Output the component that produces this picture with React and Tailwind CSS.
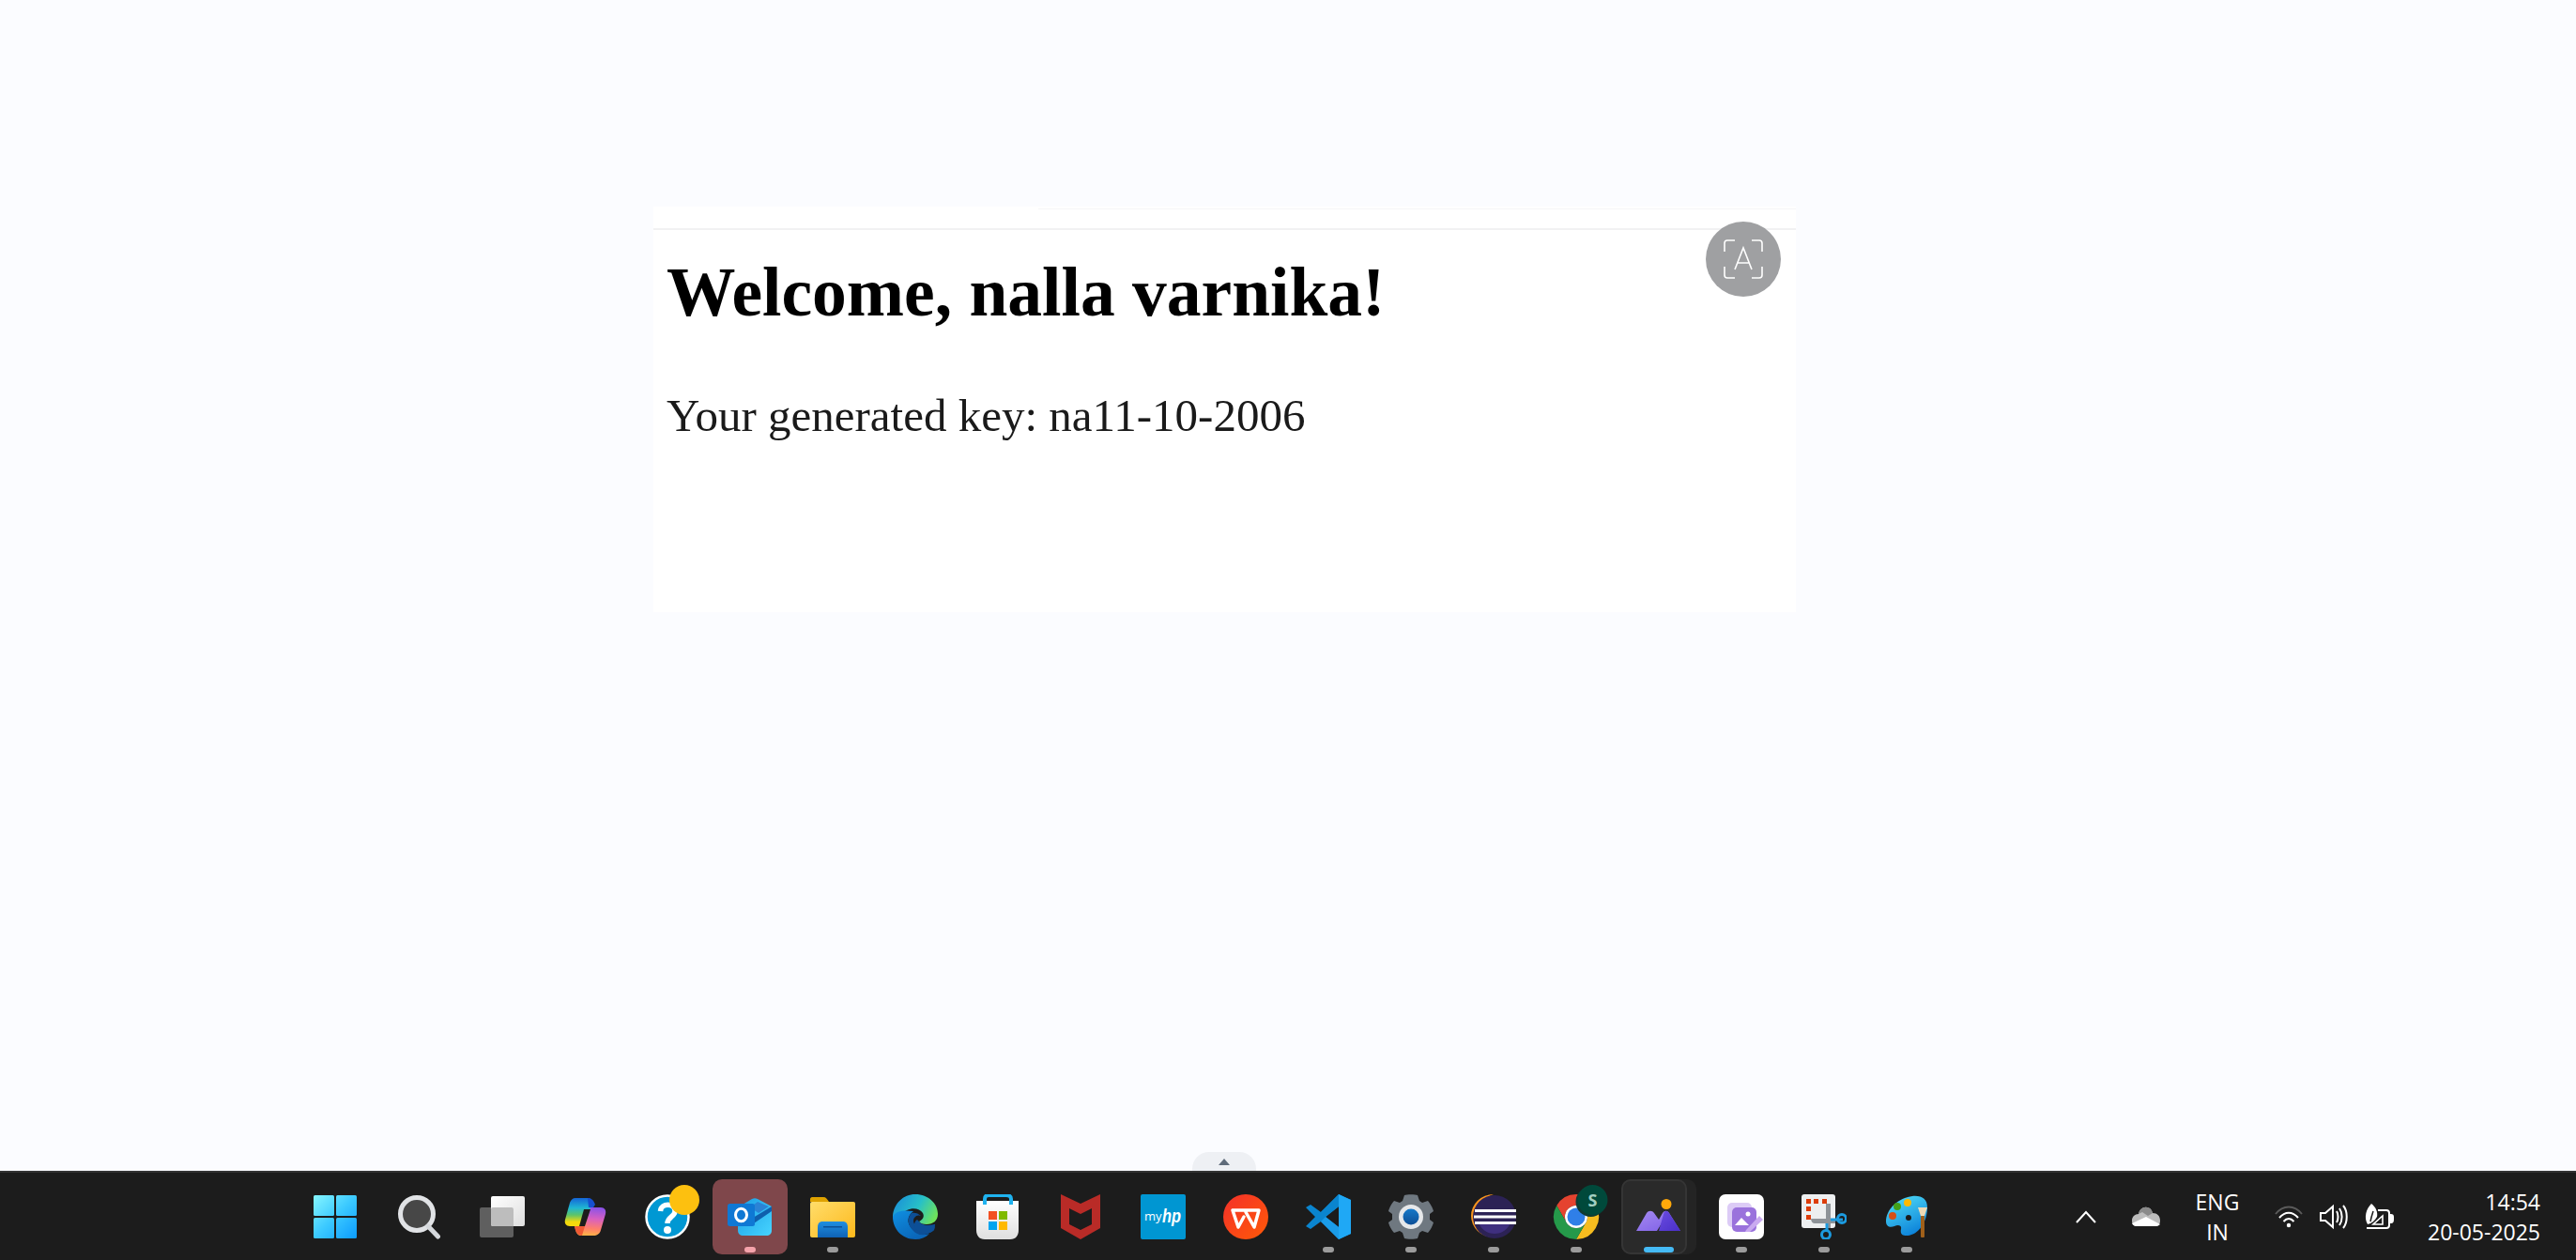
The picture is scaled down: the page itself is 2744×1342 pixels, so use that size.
import React from 'react';

const Start = () => (
  <svg width="48" height="48" viewBox="0 0 48 48" className="-translate-x-[2px]">
    <defs>
      <linearGradient id="startG" gradientUnits="userSpaceOnUse" x1="1" y1="1" x2="47" y2="47">
        <stop offset="0" stopColor="#86f6ff" />
        <stop offset="0.5" stopColor="#3bc9ff" />
        <stop offset="1" stopColor="#0c9bfd" />
      </linearGradient>
    </defs>
    <g fill="url(#startG)">
      <rect x="1" y="1" width="22" height="22" rx="1.5" />
      <rect x="25" y="1" width="22" height="22" rx="1.5" />
      <rect x="1" y="25" width="22" height="22" rx="1.5" />
      <rect x="25" y="25" width="22" height="22" rx="1.5" />
    </g>
  </svg>
);

const Search = () => (
  <svg width="48" height="48" viewBox="0 0 48 48">
    <circle cx="21" cy="21" r="17.5" fill="#474747" stroke="#e1e3e6" strokeWidth="5" />
    <path d="M33 34 L43.5 45" stroke="#d5d8dc" strokeWidth="5" strokeLinecap="round" />
  </svg>
);

const TaskView = () => (
  <svg width="48" height="48" viewBox="0 0 48 48">
    <defs>
      <linearGradient id="tvFront" x1="0" y1="0" x2="1" y2="1">
        <stop offset="0" stopColor="#ffffff" />
        <stop offset="1" stopColor="#dedede" />
      </linearGradient>
    </defs>
    <rect x="0" y="14" width="36" height="32" rx="2" fill="#5f5f5f" />
    <rect x="12" y="2" width="36" height="32" rx="2" fill="url(#tvFront)" />
    <path d="M14 14 H34 a2 2 0 0 1 2 2 V34 H14 a2 2 0 0 1 -2 -2 V16 a2 2 0 0 1 2 -2Z" fill="#bdbdbd" />
  </svg>
);

const Copilot = () => (
  <svg width="48" height="48" viewBox="0 0 48 48">
    <defs>
      <linearGradient id="copL" x1="0.4" y1="0" x2="0.4" y2="1">
        <stop offset="0" stopColor="#1565d8" />
        <stop offset="0.35" stopColor="#1fb6d2" />
        <stop offset="0.6" stopColor="#5cc46a" />
        <stop offset="0.85" stopColor="#f4d90c" />
      </linearGradient>
      <linearGradient id="copR" x1="0.6" y1="0" x2="0.5" y2="1">
        <stop offset="0" stopColor="#8a52e8" />
        <stop offset="0.4" stopColor="#d860c0" />
        <stop offset="0.75" stopColor="#ff7f6a" />
        <stop offset="1" stopColor="#ffb347" />
      </linearGradient>
    </defs>
    <path d="M14 4 H27 C31 4 33 7 32 10 L25 34 H8 C4 34 2 31 3 27 L8 9 C9 6 11 4 14 4Z" fill="url(#copL)" />
    <path d="M27 4 C31 4 33 6 35 11 L33 14 H28 Z" fill="#1650d0" />
    <path d="M30 14 H41 C45 14 47 17 46 21 L41 38 C40 42 37 44 33 44 H20 C17 44 15 42 14 38 L13 34 H24 Z" fill="url(#copR)" />
    <path d="M13 34 H24 L21 44 C17 44 15 41 14 38Z" fill="#ef5a34" />
    <path d="M23 16 H30 L24 34 H18 Z" fill="#1c1c1c" />
  </svg>
);

const Help = () => (
  <svg width="48" height="48" viewBox="0 0 48 48" className="overflow-visible">
    <circle cx="24" cy="24" r="22.5" fill="#0098d3" stroke="#fff" strokeWidth="2.5" />
    <path d="M16.5 18 C17 9 32 9 32 18 C32 24 24 24 24 31" fill="none" stroke="#fff" strokeWidth="5.5" />
    <circle cx="24" cy="38" r="4" fill="#fff" />
    <circle cx="42" cy="6" r="16" fill="#fdc00f" />
  </svg>
);

const Outlook = () => (
  <svg width="48" height="48" viewBox="0 0 48 48">
    <defs>
      <linearGradient id="olB" x1="0" y1="0" x2="1" y2="1">
        <stop offset="0" stopColor="#1a9de4" />
        <stop offset="1" stopColor="#47d4ff" />
      </linearGradient>
    </defs>
    <path d="M11 14 L26 5 C28 4 30 4 32 5 L47 13 V38 C47 42 45 44 41 44 H17 C13 44 11 42 11 38Z" fill="url(#olB)" />
    <path d="M22 28 L47 13 V18 L25 33Z" fill="#0f5fad" />
    <path d="M24 14 L32 8 L44 13 L33 20Z" fill="#2b83d6" />
    <rect x="0" y="10" width="29" height="24" rx="2.5" fill="#0f78d4" />
    <ellipse cx="14.5" cy="22" rx="6" ry="6.8" fill="none" stroke="#fff" strokeWidth="3" />
  </svg>
);

const Explorer = () => (
  <svg width="48" height="48" viewBox="0 0 48 48">
    <defs>
      <linearGradient id="fdr" x1="0" y1="0" x2="1" y2="1">
        <stop offset="0" stopColor="#ffdd6b" />
        <stop offset="1" stopColor="#fdb91c" />
      </linearGradient>
      <linearGradient id="fdrB" x1="0" y1="0" x2="0" y2="1">
        <stop offset="0" stopColor="#1f8fe0" />
        <stop offset="1" stopColor="#0f62b5" />
      </linearGradient>
    </defs>
    <path d="M0 5 C0 4 1 3 2 3 H14 C17 3 18 5 20 8 H0Z" fill="#dfa200" />
    <rect x="0" y="8" width="48" height="38" rx="2" fill="url(#fdr)" />
    <path d="M8 46 V35 C8 31 10 29 13 29 H35 C38 29 40 31 40 35 V46Z" fill="url(#fdrB)" />
    <rect x="14" y="34" width="20" height="1.5" fill="#0d4f93" />
  </svg>
);

const Edge = () => (
  <svg width="48" height="48" viewBox="0 0 48 48">
    <defs>
      <linearGradient id="edgeTop" x1="0" y1="0.2" x2="1" y2="0.6">
        <stop offset="0" stopColor="#1a8fd8" />
        <stop offset="0.55" stopColor="#27c0c8" />
        <stop offset="1" stopColor="#6fe35a" />
      </linearGradient>
      <linearGradient id="edgeLeft" x1="0" y1="0" x2="0.6" y2="1">
        <stop offset="0" stopColor="#0f8fe0" />
        <stop offset="1" stopColor="#0a65b8" />
      </linearGradient>
    </defs>
    <path d="M24 0 C38 0 48 10 48 21 C48 28 43 32 36 32 C32 32 29 31 28 29 C32 27 34 24 32 20 C29 15 21 14 15 17 C8 20 5 27 7 33 C3 30 0 27 0 23 C1 10 11 0 24 0Z" fill="url(#edgeTop)" />
    <path d="M0 24 C0 37 10 48 24 48 C30 48 35 46 39 42 C32 44 25 41 20 36 C15 31 15 23 22 18 C13 17 3 17 0 24Z" fill="url(#edgeLeft)" />
    <path d="M20 20 C15 25 16 33 21 38 C26 44 34 46 44 38 L45 34 C41 37 36 38 30 37 C24 35 20 29 23 25 C25 22 28 22 30 23 C27 20 23 19 20 20Z" fill="#0d4f96" />
    <path d="M28 29 C29 31 33 33 38 33 C42 33 46 31 45 33 L44 38 C38 44 28 42 24 36 C22 33 23 29 26 27Z" fill="#0d4f96" />
  </svg>
);

const Store = () => (
  <svg width="48" height="48" viewBox="0 0 48 48">
    <defs>
      <linearGradient id="bag" x1="0" y1="0" x2="0" y2="1">
        <stop offset="0" stopColor="#ffffff" />
        <stop offset="1" stopColor="#dfdfdf" />
      </linearGradient>
    </defs>
    <path d="M1 7 H46 V38 C46 44 43 48 37 48 H10 C4 48 1 44 1 38Z" fill="url(#bag)" />
    <path d="M10 11 V5 C10 2 12 1 14 1 H33 C36 1 38 2 38 5 V11" fill="none" stroke="#1fb2ef" strokeWidth="4" />
    <rect x="14" y="18" width="9" height="9" fill="#f25022" />
    <rect x="25" y="18" width="9" height="9" fill="#7fba00" />
    <rect x="14" y="29" width="9" height="9" fill="#00a4ef" />
    <rect x="25" y="29" width="9" height="9" fill="#ffb900" />
  </svg>
);

const McAfee = () => (
  <svg width="48" height="48" viewBox="0 0 48 48">
    <path fillRule="evenodd" d="M3 0 L24 10 L45 0 V36 L24 48 L3 36Z M12 15 V32 L24 38 L36 32 V15 L24 21Z" fill="#b92b27" />
  </svg>
);

const MyHp = () => (
  <svg width="48" height="48" viewBox="0 0 48 48" className="overflow-visible">
    <rect x="0" y="0" width="48" height="48" rx="2" fill="#0096d2" />
    <text x="4" y="28" fill="#fff" fontFamily="Open Sans, sans-serif" fontSize="13">my</text>
    <text x="23" y="30" fill="#fff" fontFamily="Liberation Sans, sans-serif" fontStyle="italic" fontWeight="700" fontSize="20" textLength="20" lengthAdjust="spacingAndGlyphs">hp</text>
  </svg>
);

const Wps = () => (
  <svg width="48" height="48" viewBox="0 0 48 48">
    <defs>
      <linearGradient id="wps" x1="0" y1="0" x2="1" y2="1">
        <stop offset="0" stopColor="#f4302a" />
        <stop offset="1" stopColor="#ff5a07" />
      </linearGradient>
    </defs>
    <circle cx="24" cy="24" r="24" fill="url(#wps)" />
    <path d="M10 17 H38 L33 35 L24 19 M10 17 L16 35 L22 24" fill="none" stroke="#fff" strokeWidth="3.5" strokeLinejoin="round" strokeLinecap="round" />
  </svg>
);

const VsCode = () => (
  <svg width="48" height="48" viewBox="0 0 48 48">
    <path d="M35 48 L48 42 V6 L35 0 L16 19 L5 11 L0 14 L10 24 L0 34 L5 37 L16 29Z" fill="#0a85cf" />
    <path d="M35 0 L48 6 V42 L35 48Z" fill="#1fa8f5" />
    <path d="M35 13 L21 24 L35 35Z" fill="#1c1c1c" />
    <path d="M35 0 L35 13 L21 24 L16 19Z" fill="#0a85cf" />
    <path d="M35 48 V35 L21 24 L16 29Z" fill="#1b9ce8" />
  </svg>
);

const Gear = () => (
  <svg width="48" height="48" viewBox="0 0 48 48">
    <defs>
      <linearGradient id="gearB" x1="0" y1="0" x2="0" y2="1">
        <stop offset="0" stopColor="#1679c9" />
        <stop offset="1" stopColor="#0d4f96" />
      </linearGradient>
    </defs>
    <path d="M17 1 C19 0 29 0 31 1 L33 7 C34 8 35 8 36 9 L42 7 C44 9 47 14 48 18 L44 21 C44 23 44 25 44 27 L48 30 C47 34 44 39 42 41 L36 39 C35 40 34 40 33 41 L31 47 C29 48 19 48 17 47 L15 41 C14 40 13 40 12 39 L6 41 C4 39 1 34 0 30 L4 27 C4 25 4 23 4 21 L0 18 C1 14 4 9 6 7 L12 9 C13 8 14 8 15 7Z" fill="#6f7880" />
    <circle cx="24" cy="24" r="13" fill="#e6e8ea" />
    <circle cx="24" cy="24" r="8.5" fill="url(#gearB)" />
  </svg>
);

const Eclipse = () => (
  <svg width="48" height="48" viewBox="0 0 48 48">
    <path d="M24 0 A24 24 0 0 0 24 46 A24 23 0 0 1 24 0Z" fill="#f7941e" />
    <circle cx="25" cy="24" r="23" fill="#2c2255" />
    <path d="M8 30 A18 18 0 0 0 42 30Z" fill="#3f2f7f" />
    <rect x="4" y="16" width="44" height="3" fill="#fff" />
    <rect x="3" y="22.5" width="45" height="3" fill="#fff" />
    <rect x="4" y="29" width="44" height="3" fill="#fff" />
  </svg>
);

const Chrome = () => (
  <svg width="48" height="48" viewBox="0 0 48 48" className="overflow-visible">
    <path d="M24 0a24 24 0 0 1 20.8 12H24a12 12 0 0 0-10.4 18L3.2 12A24 24 0 0 1 24 0" fill="#e5432f" />
    <path d="M44.8 12A24 24 0 0 1 24 48L34.4 30A12 12 0 0 0 24 12Z" fill="#f6bc1f" />
    <path d="M3.2 12A24 24 0 0 0 24 48L34.4 30A12 12 0 0 1 13.6 30Z" fill="#25994a" />
    <circle cx="24" cy="24" r="12" fill="#fff" />
    <circle cx="24" cy="24" r="9.5" fill="#2f7fe8" />
    <circle cx="39.5" cy="8" r="16" fill="#0f3a33" />
    <circle cx="41.5" cy="6" r="16" fill="#00493b" />
    <text x="41.5" y="12.5" textAnchor="middle" fill="#a3cfc2" fontFamily="Open Sans, sans-serif" fontWeight="700" fontSize="18">S</text>
  </svg>
);

const Mountains = () => (
  <svg width="48" height="48" viewBox="0 0 48 48">
    <defs>
      <linearGradient id="mtA" x1="0" y1="0" x2="1" y2="1">
        <stop offset="0" stopColor="#a58af0" />
        <stop offset="1" stopColor="#7b5ce6" />
      </linearGradient>
      <linearGradient id="mtB" x1="0" y1="0" x2="1" y2="1">
        <stop offset="0" stopColor="#6a4ce0" />
        <stop offset="1" stopColor="#4a2fc8" />
      </linearGradient>
    </defs>
    <circle cx="32" cy="10.5" r="5.5" fill="#ffa80a" />
    <g transform="translate(0 5)">
      <path d="M0 34 L11 15 C13 12 17 12 19 15 L24 22 L28 15 C30 12 33 12 35 15 L47 34 H32 L27 26 L22 34Z" fill="url(#mtA)" />
      <path d="M24 34 L29 16 C30 12 33 12 35 15 L47 34Z" fill="url(#mtB)" />
    </g>
  </svg>
);

const PhotoEdit = () => (
  <svg width="48" height="48" viewBox="0 0 48 48">
    <rect x="0" y="0" width="48" height="48" rx="7" fill="#fff" />
    <rect x="9" y="9" width="26" height="26" rx="5" fill="#dccbf6" />
    <rect x="14" y="14" width="26" height="26" rx="5" fill="#9a72dc" />
    <circle cx="31" cy="21" r="2.5" fill="#fff" />
    <path d="M17 33 L24 25 L29 30 L32 33Z" fill="#fff" />
    <path d="M29 38 L43 23 L47 27 L33 40 L28 40Z" fill="#c9aaf0" />
  </svg>
);

const Snip = () => (
  <svg width="48" height="48" viewBox="0 0 48 48">
    <rect x="0" y="0" width="36" height="36" rx="3" fill="#edeff0" />
    <g fill="#dd3d0b">
      <rect x="5" y="5" width="5" height="5" />
      <rect x="13" y="5" width="5" height="5" />
      <rect x="22" y="5" width="5" height="5" />
      <rect x="5" y="13" width="5" height="5" />
      <rect x="5" y="22" width="5" height="5" />
    </g>
    <path d="M26 10 H31 V36 H26Z" fill="#8e9398" />
    <path d="M10 26 H36 V31 H14 C12 31 10 29 10 26Z" fill="#8e9398" />
    <path d="M31 27 H44" stroke="#1c9be0" strokeWidth="3" />
    <path d="M27 31 V38" stroke="#1c9be0" strokeWidth="3" />
    <circle cx="43" cy="26" r="4.5" fill="none" stroke="#1c9be0" strokeWidth="3" />
    <circle cx="26" cy="43" r="4.5" fill="none" stroke="#1c9be0" strokeWidth="3" />
  </svg>
);

const Paint = () => (
  <svg width="48" height="48" viewBox="0 0 48 48">
    <defs>
      <linearGradient id="pal" x1="0.2" y1="0" x2="0.7" y2="1">
        <stop offset="0" stopColor="#4fdcf7" />
        <stop offset="1" stopColor="#0a7fd8" />
      </linearGradient>
    </defs>
    <path d="M30 2 C40 1 46 5 46 14 C46 30 36 44 24 44 C19 44 17 42 18 37 C19 33 15 32 11 34 C6 36 2 34 2 29 C2 16 15 4 30 2Z" fill="url(#pal)" />
    <circle cx="9" cy="23" r="4" fill="#d84f16" />
    <circle cx="14" cy="13" r="4" fill="#43a018" />
    <circle cx="25" cy="9" r="4" fill="#ffb900" />
    <circle cx="26" cy="25" r="3" fill="#1c1c1c" />
    <path d="M36 14 H46 L43 23 H39Z" fill="#ecd9b4" />
    <rect x="39" y="23" width="4" height="23" rx="1" fill="#a0601a" />
  </svg>
);

const apps = [
  { id: 'start', Icon: Start },
  { id: 'search', Icon: Search },
  { id: 'taskview', Icon: TaskView },
  { id: 'copilot', Icon: Copilot },
  { id: 'help', Icon: Help },
  { id: 'outlook', Icon: Outlook, tile: 'bg-[#7f474b]', pill: 'w-[12px] bg-[#f5a3ab]' },
  { id: 'explorer', Icon: Explorer, pill: 'w-[12px] bg-[#9b9b9b]' },
  { id: 'edge', Icon: Edge },
  { id: 'store', Icon: Store },
  { id: 'mcafee', Icon: McAfee },
  { id: 'myhp', Icon: MyHp },
  { id: 'wps', Icon: Wps },
  { id: 'vscode', Icon: VsCode, pill: 'w-[12px] bg-[#9b9b9b]' },
  { id: 'settings', Icon: Gear, pill: 'w-[12px] bg-[#9b9b9b]' },
  { id: 'eclipse', Icon: Eclipse, pill: 'w-[12px] bg-[#9b9b9b]' },
  { id: 'chrome', Icon: Chrome, pill: 'w-[12px] bg-[#9b9b9b]' },
  { id: 'photos', Icon: Mountains, active: true, pill: 'w-[32px] bg-[#45baf5]' },
  { id: 'edit', Icon: PhotoEdit, pill: 'w-[12px] bg-[#9b9b9b]' },
  { id: 'snip', Icon: Snip, pill: 'w-[12px] bg-[#9b9b9b]' },
  { id: 'paint', Icon: Paint, pill: 'w-[12px] bg-[#9b9b9b]' },
];

const Tray = () => (
  <div className="ml-auto flex items-center pr-[38px] text-white font-['Open_Sans',sans-serif] text-[23px] leading-[32px]">
    <svg width="22" height="14" viewBox="0 0 22 14" fill="none" stroke="#fff" strokeWidth="2">
      <path d="M1 13 L11 2 L21 13" />
    </svg>
    <svg width="32" height="22" viewBox="0 0 30 22" className="ml-[37px]">
      <path d="M7 8 C8 3 12 0 16 1 C19 1 21 3 22 7 C27 7 30 10 30 15 C30 19 28 21 25 21 H5 C2 21 0 19 0 15 C0 11 3 8 7 8Z" fill="#bdbdbd" />
      <path d="M7 8 C8 3 12 0 16 1 C19 1 21 3 22 7 L17 10 L11 6Z" fill="#8a8a8a" />
      <path d="M0 18 L15 11 L30 19 C29 20 27 21 25 21 H5 C3 21 1 20 0 18Z" fill="#fff" />
    </svg>
    <div className="ml-[30px] w-[60px] text-center">
      <div>ENG</div>
      <div>IN</div>
    </div>
    <svg width="32" height="26" viewBox="0 0 30 26" fill="none" stroke="#fff" strokeWidth="2" className="ml-[30px]">
      <path d="M1 10 C9 0 21 0 29 10" stroke="#5b5b5b" />
      <path d="M5 14 C11 7 19 7 25 14" />
      <path d="M9.5 18 C13 14 17 14 20.5 18" />
      <circle cx="15" cy="22" r="2.2" fill="#fff" stroke="none" />
    </svg>
    <svg width="32" height="28" viewBox="0 0 30 28" fill="none" stroke="#fff" strokeWidth="2" className="ml-[16px]">
      <path d="M1 10 H6 L14 3 V25 L6 18 H1Z" />
      <path d="M18 8 C20 11 20 17 18 20" />
      <path d="M21 5 C24.5 10 24.5 18 21 23" />
      <path d="M25 2 C30 8 30 20 25 26" />
    </svg>
    <svg width="32" height="28" viewBox="0 0 30 28" fill="none" stroke="#fff" strokeWidth="2" className="ml-[16px]">
      <path d="M7 0 C12 4 14 9 13 14 C11 18 7 21 3 22 C-1 15 1 6 7 0Z" fill="#fff" stroke="none" />
      <path d="M6 19 C7 14 8 11 9 8" stroke="#1c1c1c" strokeWidth="1.5" />
      <path d="M14 7 H23 C25 7 26 8 26 10 V23 C26 25 25 26 23 26 H2" />
      <path d="M19 13 V22 H9 Z" strokeWidth="1.6" />
      <path d="M26 12 H28 C29 12 30 13 30 14 V17 C30 19 29 20 28 20 H26" fill="#fff" />
    </svg>
    <div className="ml-[10px] w-[146px] text-right">
      <div>14:54</div>
      <div>20-05-2025</div>
    </div>
  </div>
);

export default function App() {
  return (
    <div className="flex h-screen flex-col overflow-hidden bg-[#fbfcff]">
      <main className="relative flex-1">
        <section className="relative ml-[696px] mt-[220px] h-[432px] w-[1217px] bg-white font-['Liberation_Serif',serif] text-black">
          <div className="pt-[2px]">
            <div className="ml-[410px] h-[1px] bg-[#f6f6f7]" />
          </div>
          <div className="pt-[20px]">
            <div className="h-[2px] bg-[#f1f1f2]" />
          </div>
          <div className="pl-[14px] blur-[0.7px]">
            <h1 className="mt-[23px] text-[73.5px] font-bold leading-[88px]">Welcome, nalla varnika!</h1>
            <p className="mt-[59px] text-[49px] leading-[56px] text-[#1a1a1a]">Your generated key: na11-10-2006</p>
          </div>
          <button className="absolute right-[16px] top-[16px] flex h-[80px] w-[80px] items-center justify-center rounded-full bg-[#9fa0a2]">
            <svg width="42" height="42" viewBox="0 0 42 42" fill="none" stroke="#fff" strokeWidth="1.6">
              <path d="M1 13 V4 C1 2 2 1 4 1 H12" />
              <path d="M30 1 H38 C40 1 41 2 41 4 V13" />
              <path d="M41 29 V38 C41 40 40 41 38 41 H30" />
              <path d="M12 41 H4 C2 41 1 40 1 38 V29" />
              <path d="M12 32 L21 9 L30 32 M15 25 H27" />
            </svg>
          </button>
        </section>
        <div className="absolute bottom-0 left-[1270px] flex h-[20px] w-[68px] items-center justify-center rounded-t-[18px] bg-[#eef0f4]">
          <div className="h-0 w-0 border-x-[6px] border-b-[7px] border-x-transparent border-b-[#5f6b7a]" />
        </div>
      </main>
      <footer className="flex h-[95px] shrink-0 items-center border-t-2 border-[#333333] bg-[#1c1c1c] pl-[315px]">
        {apps.map(({ id, Icon, tile, pill, active }) => (
          <div key={id} className="relative flex h-[80px] w-[88px] shrink-0 justify-center pt-[16px]">
            {tile && <div className={`absolute inset-x-[4px] inset-y-0 rounded-[10px] ${tile}`} />}
            {active && (
              <>
                <div className="absolute inset-y-0 left-[4px] w-[80px] rounded-[10px] bg-[#242424]" />
                <div className="absolute inset-y-0 left-[4px] w-[70px] rounded-[10px] border-2 border-[#353535] bg-[#2a2a2a]" />
              </>
            )}
            <div className="relative h-[48px] w-[48px]">
              <Icon />
            </div>
            {pill && <div className={`absolute bottom-[2px] h-[6px] rounded-full ${pill}`} />}
          </div>
        ))}
        <Tray />
      </footer>
    </div>
  );
}
